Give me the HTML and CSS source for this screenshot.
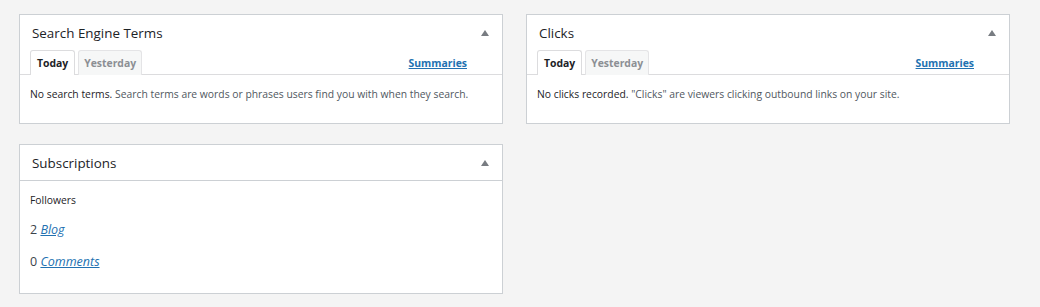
FILE: index.html
```html
<!DOCTYPE html>
<html lang="en">
<head>
    <meta charset="UTF-8">
    <title>Stats Widgets</title>
    <link rel="stylesheet" href="styles.css">
</head>
<body>

    <div class="dashboard">

        <!-- Left column -->
        <div class="column">

            <div class="postbox">
                <div class="postbox-header">
                    <h2>Search Engine Terms</h2>
                    <span class="toggle"></span>
                </div>
                <div class="tabs-row">
                    <ul class="tabs">
                        <li class="active">Today</li>
                        <li>Yesterday</li>
                    </ul>
                    <a href="#" class="summaries">Summaries</a>
                </div>
                <div class="inside">
                    <p><strong>No search terms.</strong> Search terms are words or phrases users find you with when they search.</p>
                </div>
            </div>

            <div class="postbox">
                <div class="postbox-header bordered">
                    <h2>Subscriptions</h2>
                    <span class="toggle"></span>
                </div>
                <div class="inside subs">
                    <p class="label">Followers</p>
                    <p class="count">2 <a href="#">Blog</a></p>
                    <p class="count">0 <a href="#">Comments</a></p>
                </div>
            </div>

        </div>

        <!-- Right column -->
        <div class="column">

            <div class="postbox">
                <div class="postbox-header">
                    <h2>Clicks</h2>
                    <span class="toggle"></span>
                </div>
                <div class="tabs-row">
                    <ul class="tabs">
                        <li class="active">Today</li>
                        <li>Yesterday</li>
                    </ul>
                    <a href="#" class="summaries">Summaries</a>
                </div>
                <div class="inside">
                    <p><strong>No clicks recorded.</strong> "Clicks" are viewers clicking outbound links on your site.</p>
                </div>
            </div>

        </div>

    </div>

</body>
</html>
```

FILE: styles.css
```css
/* General reset */
* {
    margin: 0;
    padding: 0;
    box-sizing: border-box;
}

body {
    background-color: #F4F4F4;
    color: #1D2327;
    font-family: "Open Sans", sans-serif;
}

/* Two column layout */
.dashboard {
    display: flex;
    gap: 23px;
    padding: 14px 0 0 19px;
}

.column {
    width: 484px;
    display: flex;
    flex-direction: column;
    gap: 20px;
}

/* Widget box */
.postbox {
    background-color: #FFF;
    border: 1px solid #CCD0D4;
}

.postbox-header {
    display: flex;
    justify-content: space-between;
    align-items: center;
    height: 35px;
    padding: 0 13px 0 12px;
}

.postbox-header.bordered {
    height: 36px;
    border-bottom: 1px solid #CCD0D4;
}

.postbox-header h2 {
    font-size: 13.4px;
    font-weight: 500;
    color: #1D2327;
}

.toggle {
    width: 0;
    height: 0;
    border-left: 4px solid transparent;
    border-right: 4px solid transparent;
    border-bottom: 6px solid #787C82;
}

/* Tabs */
.tabs-row {
    display: flex;
    justify-content: space-between;
    align-items: flex-end;
    height: 25px;
    padding: 0 35px 0 10px;
    border-bottom: 1px solid #DCDCDE;
}

.tabs {
    display: flex;
    gap: 3px;
    list-style: none;
}

.tabs li {
    height: 25px;
    margin-bottom: -1px;
    padding: 0 6px;
    font-size: 10.4px;
    font-weight: 700;
    line-height: 25px;
    color: #8C8F94;
    background-color: #F6F7F7;
    border: 1px solid #E4E4E6;
    border-bottom: none;
    border-radius: 3px 3px 0 0;
}

.tabs li + li {
    padding: 0 5px;
}

.tabs li.active {
    color: #1D2327;
    background-color: #FFF;
    border-color: #DCDCDE;
}

.summaries {
    font-size: 10.4px;
    font-weight: 700;
    color: #2271B1;
    line-height: 22px;
    margin-bottom: 0;
}

/* Widget content */
.inside {
    padding: 11px 10px 21px;
    font-size: 10.35px;
    line-height: 16px;
    color: #50575E;
}

.inside strong {
    font-weight: 500;
    color: #1D2327;
}

.inside.subs {
    padding: 11px 10px 23px;
    color: #1D2327;
}

.inside.subs .label {
    margin-bottom: 14px;
}

.inside.subs .count {
    font-size: 12.5px;
    line-height: 16px;
    color: #3C434A;
}

.inside.subs .count + .count {
    margin-top: 16px;
}

.inside a {
    color: #2271B1;
    font-style: italic;
}
```
